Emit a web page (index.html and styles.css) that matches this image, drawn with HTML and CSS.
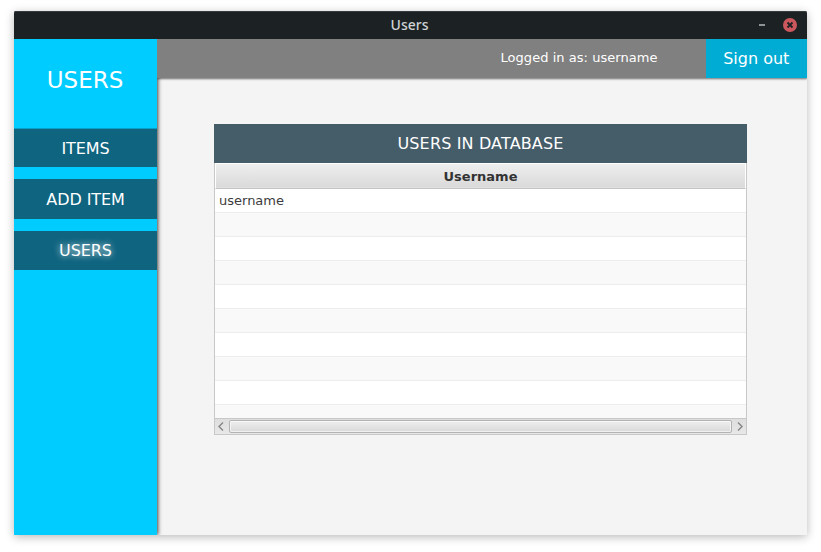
FILE: index.html
```html
<!DOCTYPE html>
<html lang="en">
<head>
<meta charset="utf-8">
<title>Users</title>
<link rel="stylesheet" href="styles.css">
</head>
<body>
<div class="window">
  <header class="titlebar">
    <span class="title">Users</span>
    <div class="controls">
      <svg width="10" height="14" viewBox="0 0 10 14"><path d="M2 7h6" stroke="#8f9394" stroke-width="2"/></svg>
      <svg width="14" height="14" viewBox="0 0 14 14"><circle cx="7" cy="7" r="7" fill="#cc575d"/><path d="M4.500 4.500l5 5M9.500 4.500l-5 5" stroke="#1c2224" stroke-width="1.800"/></svg>
    </div>
  </header>
  <div class="body">
    <nav class="sidebar">
      <h1 class="heading">USERS</h1>
      <a class="nav items">ITEMS</a>
      <a class="nav add">ADD ITEM</a>
      <a class="nav active">USERS</a>
    </nav>
    <main class="main">
      <div class="topbar">
        <span class="login">Logged in as: username</span>
        <a class="signout">Sign out</a>
      </div>
      <section class="panel">
        <h2 class="caption">USERS IN DATABASE</h2>
        <div class="table">
          <div class="column">Username</div>
          <div class="rows">
            <div class="row">username</div>
            <div class="row"></div>
            <div class="row"></div>
            <div class="row"></div>
            <div class="row"></div>
            <div class="row"></div>
            <div class="row"></div>
            <div class="row"></div>
            <div class="row"></div>
            <div class="row"></div>
          </div>
          <div class="scrollbar">
            <svg class="arrow" width="14" height="15" viewBox="0 0 14 15"><path d="M8 3.500L4 7.500L8 11.500" fill="none" stroke="#858585" stroke-width="1.400"/></svg>
            <div class="thumb"></div>
            <svg class="arrow" width="14" height="15" viewBox="0 0 14 15"><path d="M6 3.500L10 7.500L6 11.500" fill="none" stroke="#858585" stroke-width="1.400"/></svg>
          </div>
        </div>
      </section>
    </main>
  </div>
</div>
</body>
</html>
```
FILE: styles.css
```css
* { box-sizing: border-box; }

body {
  margin: 0;
  padding: 11px 14px 17px;
  height: 552px;
  overflow: hidden;
  background: #fff;
  font-family: "DejaVu Sans", sans-serif;
  color: #fff;
}

h1, h2 { margin: 0; font-weight: normal; }

.window {
  display: flex;
  flex-direction: column;
  height: 524px;
  border-radius: 2px 2px 0 0;
  background: #f4f4f4;
  box-shadow: 0 2px 10px rgba(0, 0, 0, 0.28);
}

.titlebar {
  display: grid;
  grid-template-columns: 1fr auto 1fr;
  align-items: center;
  height: 28px;
  padding-right: 10px;
  border-radius: 2px 2px 0 0;
  background: #1c2224;
  box-shadow: inset 0 1px #353b3d;
}

.title {
  grid-column: 2;
  margin-right: -8px;
  font: 500 14px/28px "Noto Sans", sans-serif;
  color: #cfd3d4;
}

.controls {
  display: flex;
  justify-content: flex-end;
  gap: 16px;
}

.body { display: flex; flex: 1; }

.sidebar {
  position: relative;
  z-index: 2;
  width: 143px;
  background: #00ccff;
  box-shadow: 1px 0 4px rgba(0, 0, 0, 0.75);
  clip-path: inset(0 -10px 0 0);
}

.heading {
  height: 89px;
  padding-right: 1px;
  font-size: 23px;
  line-height: 82px;
  text-align: center;
}

.nav {
  display: block;
  height: 39px;
  margin-bottom: 12px;
  background: #0f647f;
  font-size: 16px;
  line-height: 39px;
  text-align: center;
  letter-spacing: -0.1px;
}

.items { border-top: 1px solid #05a0ca; line-height: 40px; }
.add { height: 40px; line-height: 41px; }
.active { text-shadow: 0 0 6px rgba(255, 255, 255, 0.95); }

.main { flex: 1; }

.topbar {
  position: relative;
  z-index: 3;
  display: flex;
  justify-content: flex-end;
  height: 39px;
  background: #808080;
  box-shadow: 0 1px 2px rgba(0, 0, 0, 0.55);
  clip-path: inset(0 0 -6px 0);
}

.login {
  margin-right: 48px;
  font-size: 13px;
  line-height: 37px;
  letter-spacing: 0.04px;
}

.signout {
  width: 101.500px;
  background: #00acd4;
  font-size: 16px;
  line-height: 39px;
  text-align: center;
}

.panel { margin: 46px 60px 0 57px; }

.caption {
  height: 39px;
  background: #455c69;
  font-size: 16px;
  line-height: 40px;
  text-align: center;
  letter-spacing: 0.15px;
}

.table {
  height: 272px;
  border: 1px solid #c8c8c8;
  border-top: 0;
  background: #fff;
  color: #3c3c3c;
  font-size: 13px;
}

.column {
  height: 26px;
  border: 1px solid #fff;
  border-bottom-color: #c4c4c4;
  background: linear-gradient(#eeeeee, #d9d9d9);
  box-shadow: inset 0 -1px #e0e0e0;
  color: #333;
  font-weight: bold;
  line-height: 25px;
  text-align: center;
}

.rows { height: 229px; overflow: hidden; }

.row {
  height: 24px;
  padding-left: 4px;
  border-bottom: 1px solid #ededed;
  line-height: 23px;
}

.row:nth-child(even) { background: #f9f9f9; }

.scrollbar {
  display: flex;
  height: 16px;
  border-top: 1px solid #c8c8c8;
  background: linear-gradient(#dedede, #e8e8e8);
}

.arrow { flex: none; }

.thumb {
  flex: 1;
  height: 13px;
  margin-top: 1px;
  border: 1px solid #b3b3b3;
  border-radius: 2px;
  background: linear-gradient(#eeeeee, #d9d9d9);
  box-shadow: inset 0 0 0 1px rgba(255, 255, 255, 0.6);
}
```
